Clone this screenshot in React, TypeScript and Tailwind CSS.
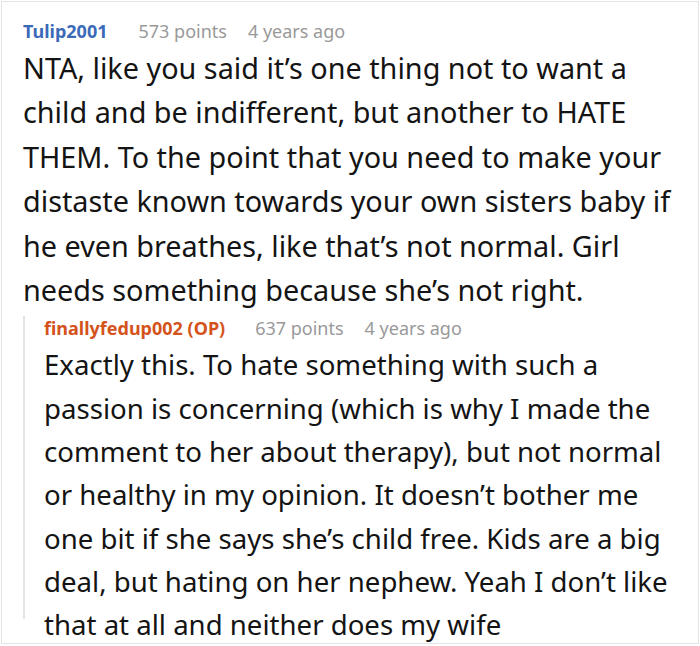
const first = [
  'NTA, like you said it’s one thing not to want a',
  'child and be indifferent, but another to HATE',
  'THEM. To the point that you need to make your',
  'distaste known towards your own sisters baby if',
  'he even breathes, like that’s not normal. Girl',
  'needs something because she’s not right.',
];

const reply = [
  'Exactly this. To hate something with such a',
  'passion is concerning (which is why I made the',
  'comment to her about therapy), but not normal',
  'or healthy in my opinion. It doesn’t bother me',
  'one bit if she says she’s child free. Kids are a big',
  'deal, but hating on her nephew. Yeah I don’t like',
  'that at all and neither does my wife',
];

export default function App() {
  return (
    <div className="w-[700px] h-[646px] bg-white overflow-hidden" style={{ fontFamily: '"Noto Sans", "Open Sans", sans-serif' }}>
      <div className="mx-[1px] mt-[1px] h-[643px] border border-[#e3e3e3] pl-[21px] pt-[17px]">
        <div className="flex items-baseline text-[18px] leading-[24px]">
          <span className="font-bold text-[#3b6ab8]">Tulip2001</span>
          <span className="ml-[31px] text-[#999999]">573 points</span>
          <span className="ml-[21px] text-[#999999]">4 years ago</span>
        </div>
        <div className="mt-[3px] text-[28.8px] leading-[44.4px] text-[#141414] whitespace-nowrap">
          {first.map((l) => (
            <div key={l}>{l}</div>
          ))}
        </div>
        <div className="mt-[4px] h-[303px] border-l-2 border-[#e3e3e3] pl-[19px]">
          <div className="flex items-baseline text-[18px] leading-[24px]">
            <span className="font-bold text-[#d4531c]">finallyfedup002 (OP)</span>
            <span className="ml-[30px] text-[#999999]">637 points</span>
            <span className="ml-[21px] text-[#999999]">4 years ago</span>
          </div>
          <div className="mt-[3px] text-[27.6px] leading-[43.3px] text-[#141414] whitespace-nowrap">
            {reply.map((l) => (
              <div key={l}>{l}</div>
            ))}
          </div>
        </div>
      </div>
    </div>
  );
}
